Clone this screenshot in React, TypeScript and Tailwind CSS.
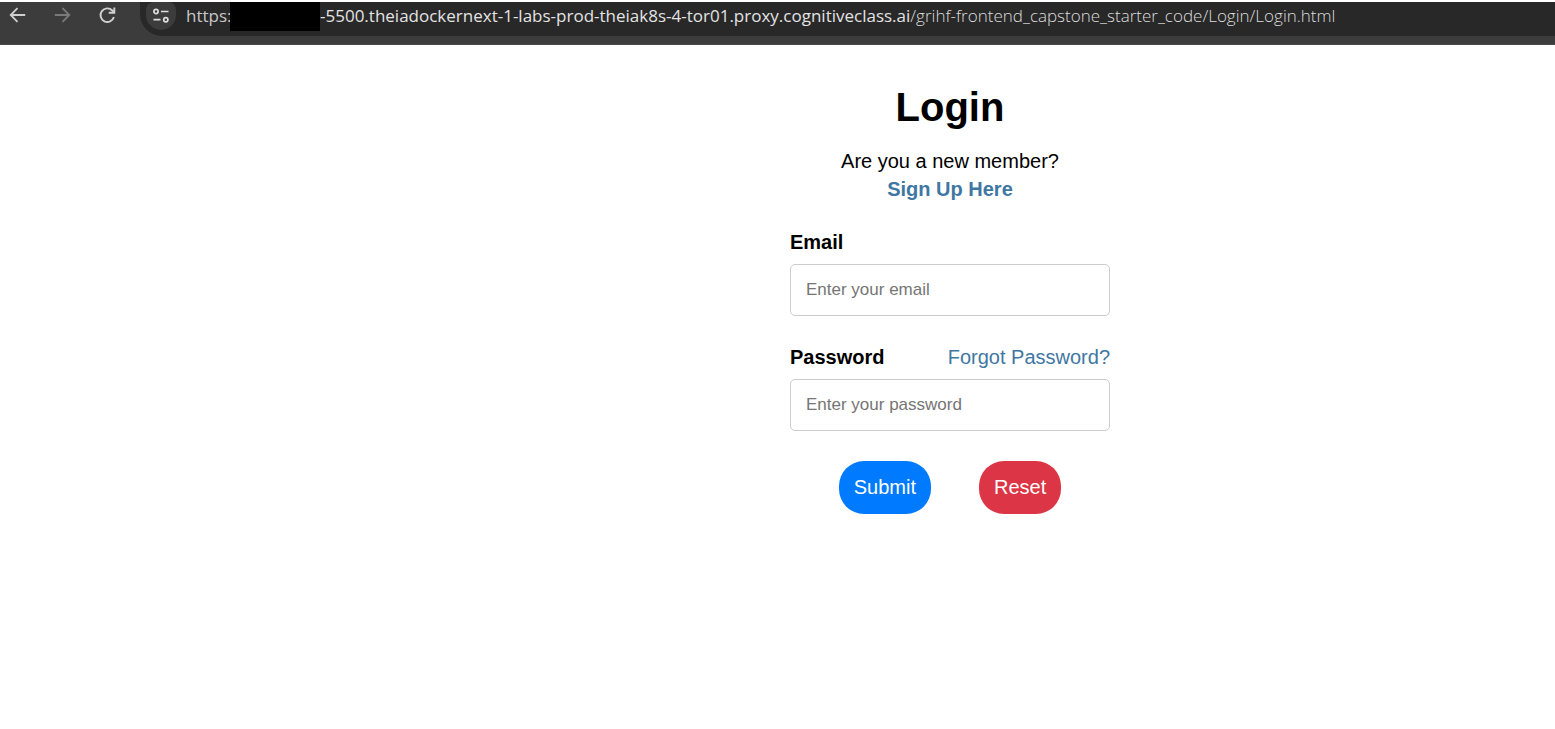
import type { InputHTMLAttributes, ReactNode } from "react";

function AddressBar() {
  return (
    <header className="mt-0.5 flex h-[43px] items-start overflow-hidden border-b border-[#4a4a4a] bg-[#3c3c3c]">
      <nav className="flex h-7 flex-none items-center gap-[25px] pr-[22px] pl-2">
        <button type="button" aria-label="Back" className="text-[#d0d0d0]">
          <svg width="20" height="20" viewBox="0 0 20 20" fill="none" stroke="currentColor" strokeWidth="1.8">
            <path d="M17.2 9H3M9.5 2.2 2.7 9l6.8 6.8" />
          </svg>
        </button>
        <button type="button" aria-label="Forward" className="text-[#7a7a7a]">
          <svg width="20" height="20" viewBox="0 0 20 20" fill="none" stroke="currentColor" strokeWidth="1.8">
            <path d="M1.8 9H16M9.5 2.2 16.3 9l-6.8 6.8" />
          </svg>
        </button>
        <button type="button" aria-label="Reload" className="text-[#d0d0d0]">
          <svg width="20" height="20" viewBox="0 0 20 20" fill="none" stroke="currentColor" strokeWidth="1.9">
            <path d="M15.9 11a6.8 6.8 0 1 1-1.6-6.5L16 6.3" />
            <path d="M16.3 1.6v5.1h-5.6" />
          </svg>
        </button>
      </nav>
      <div className="flex h-[34px] min-w-0 flex-1 items-start rounded-bl-[22px] bg-[#282828] pl-1.5">
        <button
          type="button"
          aria-label="View site information"
          className="flex h-7 w-[30px] flex-none items-center justify-center rounded-t-[8px] rounded-b-[15px] bg-[#3c3c3c] text-[#dedede]"
        >
          <svg width="18" height="18" viewBox="0 0 18 18" fill="none" stroke="currentColor" strokeWidth="1.7">
            <circle cx="4" cy="4.5" r="2.1" />
            <path d="M9 4.5h7.5M1.5 12.7h7" />
            <circle cx="13.8" cy="12.7" r="2.1" />
          </svg>
        </button>
        <div className="flex h-7 items-center pl-[10px] font-['Open_Sans',sans-serif] text-[17px] whitespace-nowrap text-[#c7c7c7]">
          <span className="w-11">https:</span>
          <span className="-mt-px h-[30px] w-[90px] flex-none self-start bg-black" />
          <span className="text-[#e3e3e3]">
            -5500.theiadockernext-1-labs-prod-theiak8s-4-tor01.proxy.cognitiveclass.ai
          </span>
          <span className="font-light text-[#dcdcdc]">/grihf-frontend_capstone_starter_code/Login/Login.html</span>
        </div>
      </div>
    </header>
  );
}

type FieldProps = InputHTMLAttributes<HTMLInputElement> & {
  id: string;
  label: string;
  aside?: ReactNode;
};

function Field({ id, label, aside, ...input }: FieldProps) {
  return (
    <div>
      <div className="mb-2 flex justify-between">
        <label htmlFor={id} className="font-bold">
          {label}
        </label>
        {aside}
      </div>
      <input
        id={id}
        name={id}
        className="h-[52px] w-full rounded-[5px] border border-[#ccc] px-[15px] text-[17px] placeholder:text-[#757575]"
        {...input}
      />
    </div>
  );
}

export default function App() {
  return (
    <div className="min-h-screen bg-white font-['Liberation_Sans',Arial,sans-serif] text-xl leading-7 text-black">
      <AddressBar />
      <main className="flex justify-center pt-[35px] md:pl-[345px]">
        <div className="w-full max-w-80">
          <div className="text-center">
            <h1 className="mb-[13px] text-[40px] leading-[54px] font-bold">Login</h1>
            <p>Are you a new member?</p>
            <p>
              <a href="#signup" className="font-bold text-[#3f77a3]">
                Sign Up Here
              </a>
            </p>
          </div>
          <form className="mt-[25px] flex flex-col gap-[27px]">
            <Field id="email" label="Email" type="email" placeholder="Enter your email" />
            <Field
              id="password"
              label="Password"
              type="password"
              placeholder="Enter your password"
              aside={
                <a href="#forgot" className="text-[#3f77a3]">
                  Forgot Password?
                </a>
              }
            />
            <div className="mt-[3px] flex justify-center gap-12">
              <button type="submit" className="rounded-[25px] bg-[#007bff] p-[15px] leading-[23px] text-white">
                Submit
              </button>
              <button type="reset" className="rounded-[25px] bg-[#dc3545] p-[15px] leading-[23px] text-white">
                Reset
              </button>
            </div>
          </form>
        </div>
      </main>
    </div>
  );
}
